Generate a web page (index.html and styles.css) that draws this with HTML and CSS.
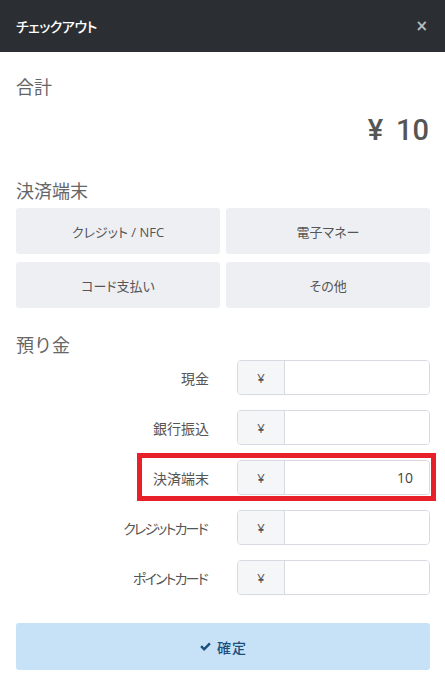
FILE: index.html
```html
<!DOCTYPE html>
<html lang="ja">
<head>
<meta charset="utf-8">
<title>チェックアウト</title>
<link rel="stylesheet" href="styles.css">
</head>
<body>
<div class="modal">
  <header class="modal-header">
    <span class="modal-title">チェックアウト</span>
    <span class="close">×</span>
  </header>
  <main class="modal-body">
    <h2 class="heading heading-total">合計</h2>
    <div class="total"><span class="yen">¥</span><span class="total-value">10</span></div>

    <h2 class="heading heading-terminal">決済端末</h2>
    <div class="method-grid">
      <button class="method">クレジット / NFC</button>
      <button class="method">電子マネー</button>
      <button class="method">コード支払い</button>
      <button class="method">その他</button>
    </div>

    <h2 class="heading heading-deposit">預り金</h2>
    <div class="deposit-list">
      <div class="deposit-row">
        <label class="deposit-label">現金</label>
        <div class="input-group"><span class="prefix">¥</span><input class="amount" type="text" value=""></div>
      </div>
      <div class="deposit-row">
        <label class="deposit-label">銀行振込</label>
        <div class="input-group"><span class="prefix">¥</span><input class="amount" type="text" value=""></div>
      </div>
      <div class="deposit-row highlighted">
        <label class="deposit-label">決済端末</label>
        <div class="input-group"><span class="prefix">¥</span><input class="amount" type="text" value="10"></div>
        <div class="highlight-box"></div>
      </div>
      <div class="deposit-row">
        <label class="deposit-label kana">クレジットカード</label>
        <div class="input-group"><span class="prefix">¥</span><input class="amount" type="text" value=""></div>
      </div>
      <div class="deposit-row">
        <label class="deposit-label kana">ポイントカード</label>
        <div class="input-group"><span class="prefix">¥</span><input class="amount" type="text" value=""></div>
      </div>
    </div>

    <button class="confirm">
      <svg class="check" viewBox="0 0 16 16" width="13" height="13"><path d="M1.5 8.6 L3.6 6.5 L6.3 9.2 L12.4 3.1 L14.5 5.2 L6.3 13.4 Z" fill="currentColor"/></svg>
      <span>確定</span>
    </button>
  </main>
</div>
</body>
</html>
```

FILE: styles.css
```css
* { box-sizing: border-box; }

html, body {
  margin: 0;
  padding: 0;
  background: #ffffff;
}

body {
  font-family: "Open Sans", "Noto Sans CJK JP", sans-serif;
  color: #555555;
  font-feature-settings: "palt";
}

.modal {
  width: 445px;
}

.modal-header {
  height: 52px;
  background: #2b2f33;
  display: flex;
  align-items: center;
  justify-content: space-between;
  padding: 0 17px 0 16px;
}

.modal-title {
  color: #ffffff;
  font-family: "Noto Sans CJK JP", sans-serif;
  font-size: 14px;
  font-weight: 500;
  letter-spacing: -0.5px;
  font-feature-settings: "palt";
}

.close {
  color: #b9bcbf;
  font-family: "DejaVu Sans", sans-serif;
  font-size: 15px;
  font-weight: bold;
  line-height: 1;
}

.modal-body {
  padding: 21px 15px 0 16px;
}

.heading {
  margin: 0;
  font-family: "Noto Sans CJK JP", sans-serif;
  font-size: 18px;
  font-weight: 400;
  line-height: 26px;
  color: #666666;
  font-feature-settings: normal;
}

.total {
  margin-top: 11px;
  height: 40px;
  line-height: 40px;
  display: flex;
  justify-content: flex-end;
  align-items: baseline;
  gap: 13px;
  font-family: "Roboto", sans-serif;
  font-size: 29px;
  font-weight: 500;
  color: #555555;
  padding-right: 1px;
}

.heading-terminal {
  margin-top: 27px;
}

.method-grid {
  margin-top: 5px;
  display: grid;
  grid-template-columns: 1fr 1fr;
  column-gap: 6px;
  row-gap: 8px;
}

.method {
  height: 46px;
  border: none;
  border-radius: 3px;
  background: #eeeff3;
  color: #555555;
  font-family: "Open Sans", "Noto Sans CJK JP", sans-serif;
  font-size: 13px;
  font-feature-settings: "palt";
  padding: 0;
}

.heading-deposit {
  margin-top: 23px;
}

.deposit-list {
  margin-top: 3px;
  display: flex;
  flex-direction: column;
  gap: 15px;
}

.deposit-row {
  position: relative;
  display: flex;
  align-items: center;
  height: 35px;
}

.deposit-label {
  flex: 1;
  text-align: right;
  padding-right: 28px;
  font-family: "Noto Sans CJK JP", sans-serif;
  font-size: 14px;
  color: #555555;
  font-feature-settings: "palt";
}

.deposit-label.kana {
  letter-spacing: -1.8px;
  padding-right: 30px;
}

.input-group {
  width: 193px;
  height: 35px;
  display: flex;
  border: 1px solid #d7dae0;
  border-radius: 4px;
  overflow: hidden;
}

.prefix {
  width: 47px;
  flex: none;
  display: flex;
  align-items: center;
  justify-content: center;
  background: #f5f6f8;
  border-right: 1px solid #d7dae0;
  font-size: 13px;
  color: #555555;
}

.amount {
  flex: 1;
  min-width: 0;
  border: none;
  outline: none;
  background: #ffffff;
  text-align: right;
  padding: 0 16px 0 8px;
  font-family: "Open Sans", sans-serif;
  font-size: 14px;
  color: #444444;
}

.highlight-box {
  position: absolute;
  top: -7px;
  bottom: -6px;
  left: 121px;
  right: -6px;
  border: 5px solid #e8202a;
  pointer-events: none;
}

.confirm {
  margin-top: 28px;
  width: 100%;
  height: 47px;
  border: none;
  border-radius: 3px;
  background: #c7e2f7;
  color: #1b4f7c;
  display: flex;
  align-items: center;
  justify-content: center;
  gap: 5px;
  font-family: "Noto Sans CJK JP", sans-serif;
  font-size: 14px;
  font-weight: 500;
  letter-spacing: 1px;
  padding: 0;
}

.check {
  display: block;
}
```
